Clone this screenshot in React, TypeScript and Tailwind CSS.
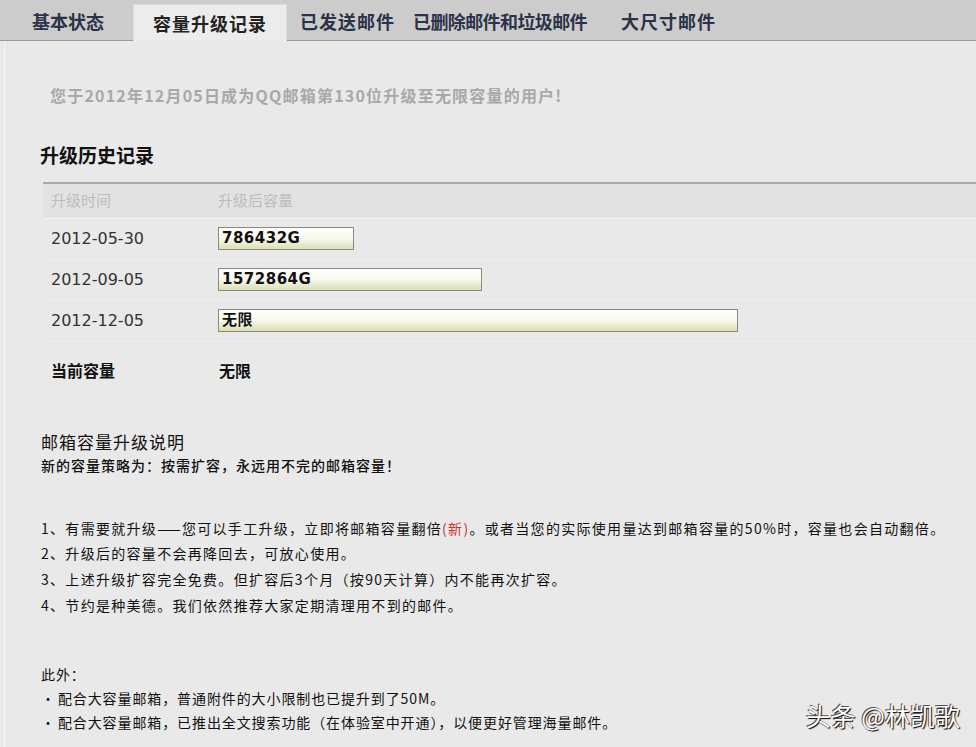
const font = { fontFamily: '"Noto Sans CJK SC", "Liberation Sans", sans-serif' };
const numFont = { fontFamily: '"DejaVu Sans", "Noto Sans CJK SC", sans-serif' };

const tabs = ["基本状态", "容量升级记录", "已发送邮件", "已删除邮件和垃圾邮件", "大尺寸邮件"];

const history = [
  { date: "2012-05-30", size: "786432G", width: "w-[136px]" },
  { date: "2012-09-05", size: "1572864G", width: "w-[264px]" },
  { date: "2012-12-05", size: "无限", width: "w-[520px]" },
];

const rules = [
  <>1、有需要就升级——您可以手工升级，立即将邮箱容量翻倍<span className="text-[#c33]">(新)</span>。或者当您的实际使用量达到邮箱容量的50%时，容量也会自动翻倍。</>,
  <>2、升级后的容量不会再降回去，可放心使用。</>,
  <>3、上述升级扩容完全免费。但扩容后3个月（按90天计算）内不能再次扩容。</>,
  <>4、节约是种美德。我们依然推荐大家定期清理用不到的邮件。</>,
];

const TabBar = () => (
  <div className="flex h-[41px] items-end border-b border-[#9a9a9a] bg-[#cccccc] pl-[4px]">
    <div className="flex h-full w-full items-end">
      {tabs.map((t, i) =>
        i === 1 ? (
          <div
            key={t}
            className="mb-[-1px] ml-[29px] mr-[13px] flex h-[37px] items-center border-x border-t border-[#dcdcdc] bg-[#ececec] px-[19px] text-[18px] font-bold tracking-[1px] text-[#222]"
          >
            {t}
          </div>
        ) : (
          <div
            key={t}
            className={`flex h-full items-center pt-[2px] text-[18px] font-bold text-[#2a3348] ${i === 0 ? "ml-[28px]" : ""} ${i === 2 ? "tracking-[1px]" : ""} ${i === 3 ? "ml-[18px] tracking-[-0.6px]" : ""} ${i === 4 ? "ml-[34px] tracking-[1px]" : ""}`}
          >
            {t}
          </div>
        )
      )}
    </div>
  </div>
);

const SizeBar = ({ text, width }: { text: string; width: string }) => (
  <div
    className={`${width} flex h-[23px] items-center border border-[#8a8a7a] bg-gradient-to-b from-[#ffffff] via-[#f8f8ec] to-[#dcdfb4] px-[3px] text-[15px] font-bold tracking-[0.5px] text-[#111]`}
    style={numFont}
  >
    {text}
  </div>
);

export default function App() {
  return (
    <div className="min-h-[747px] w-full bg-[#e9e9e9]" style={font}>
      <TabBar />
      <div className="relative ml-[4px] border-l border-[#f4f4f4] pb-[20px]">
        <p className="pl-[45px] pt-[42px] text-[16px] font-bold tracking-[1.2px] text-[#a8a8a8]">
          您于2012年12月05日成为QQ邮箱第130位升级至无限容量的用户!
        </p>

        <h2 className="mt-[34px] pl-[35px] text-[19px] font-bold text-[#111]">升级历史记录</h2>

        <div className="ml-[38px] mt-[12px] border-t-2 border-[#a9a9a9]">
          <div className="flex h-[35px] items-center border-b border-[#f3f3f3] bg-[#e2e2e2] text-[15px] text-[#bdbdbd]">
            <span className="w-[175px] pl-[8px]">升级时间</span>
            <span>升级后容量</span>
          </div>
          {history.map((h) => (
            <div key={h.date} className="flex h-[41px] items-center border-b border-[#efefef]">
              <span className="w-[175px] pl-[8px] text-[16px] text-[#333]" style={numFont}>
                {h.date}
              </span>
              <SizeBar text={h.size} width={h.width} />
            </div>
          ))}
          <div className="flex h-[56px] items-center text-[16px] font-bold text-[#111]">
            <span className="w-[176px] pl-[8px]">当前容量</span>
            <span>无限</span>
          </div>
        </div>

        <div className="mt-[32px] pl-[36px] text-[#111]">
          <p className="text-[17px] leading-[24px] tracking-[1px]">邮箱容量升级说明</p>
          <p className="text-[14px] font-medium leading-[22px] tracking-[1px]">新的容量策略为：按需扩容，永远用不完的邮箱容量！</p>
        </div>

        <div className="mt-[40px] pl-[36px] text-[14px] leading-[25.7px] tracking-[1.3px] text-[#111]">
          {rules.map((r, i) => (
            <p key={i}>{r}</p>
          ))}
        </div>

        <div className="mt-[44px] pl-[36px] text-[14px] tracking-[0.9px] text-[#111]">
          <p className="leading-[24px]">此外：</p>
          <p className="leading-[24px]">
            <span className="mr-[2px]">•</span>配合大容量邮箱，普通附件的大小限制也已提升到了50M。
          </p>
          <p className="leading-[24px]">
            <span className="mr-[2px]">•</span>配合大容量邮箱，已推出全文搜索功能（在体验室中开通），以便更好管理海量邮件。
          </p>
        </div>

        <div className="absolute bottom-[20px] right-[16px] text-[25px] text-white [text-shadow:1px_1px_1px_#000,-1px_-1px_0_#555]">
          头条 @林凯歌
        </div>
      </div>
    </div>
  );
}
